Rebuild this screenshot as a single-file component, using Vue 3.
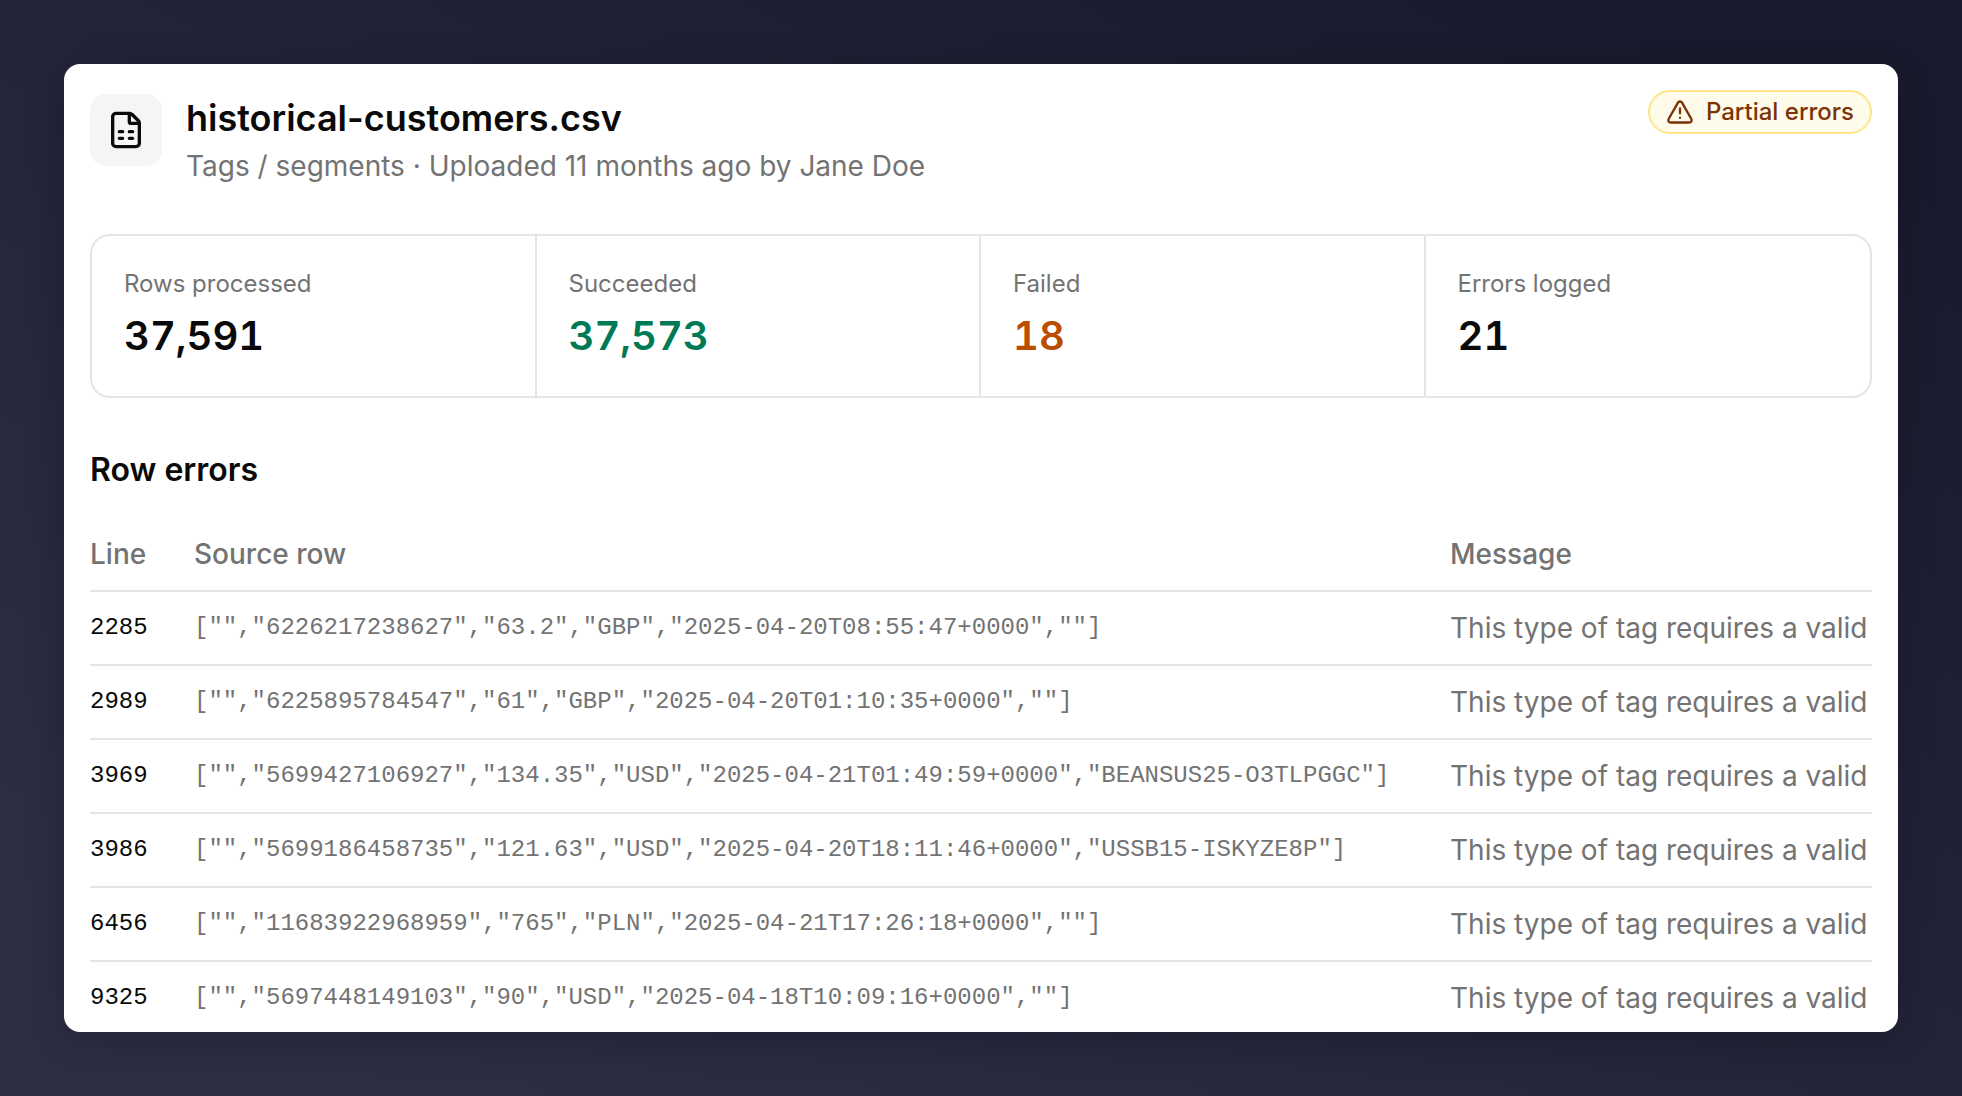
<script setup>
import { ref } from "vue";

const stats = ref([
  { label: "Rows processed", value: "37,591", tone: "" },
  { label: "Succeeded", value: "37,573", tone: "success" },
  { label: "Failed", value: "18", tone: "danger" },
  { label: "Errors logged", value: "21", tone: "" },
]);

const message = "This type of tag requires a valid";

const errors = ref([
  { line: 2285, source: '["","6226217238627","63.2","GBP","2025-04-20T08:55:47+0000",""]' },
  { line: 2989, source: '["","6225895784547","61","GBP","2025-04-20T01:10:35+0000",""]' },
  { line: 3969, source: '["","5699427106927","134.35","USD","2025-04-21T01:49:59+0000","BEANSUS25-O3TLPGGC"]' },
  { line: 3986, source: '["","5699186458735","121.63","USD","2025-04-20T18:11:46+0000","USSB15-ISKYZE8P"]' },
  { line: 6456, source: '["","11683922968959","765","PLN","2025-04-21T17:26:18+0000",""]' },
  { line: 9325, source: '["","5697448149103","90","USD","2025-04-18T10:09:16+0000",""]' },
]);
</script>

<template>
  <div class="page">
    <main class="card">
      <header class="header">
        <div class="file-icon">
          <svg viewBox="0 0 24 24" aria-hidden="true">
            <path
              d="M6 22a2 2 0 0 1-2-2V4a2 2 0 0 1 2-2h8a2.4 2.4 0 0 1 1.704.706l3.588 3.588A2.4 2.4 0 0 1 20 8v12a2 2 0 0 1-2 2z"
            />
            <path d="M14 2v5a1 1 0 0 0 1 1h5" />
            <path d="M8 13h2M14 13h2M8 17h2M14 17h2" />
          </svg>
        </div>
        <div class="heading">
          <h1>historical-customers.csv</h1>
          <p>Tags / segments · Uploaded 11 months ago by Jane Doe</p>
        </div>
        <span class="badge">
          <svg viewBox="0 0 24 24" aria-hidden="true">
            <path
              d="m21.73 18-8-14a2 2 0 0 0-3.48 0l-8 14A2 2 0 0 0 4 21h16a2 2 0 0 0 1.73-3"
            />
            <path d="M12 9v4M12 17h.01" />
          </svg>
          Partial errors
        </span>
      </header>

      <dl class="stats">
        <div v-for="stat in stats" :key="stat.label" class="stat">
          <dt>{{ stat.label }}</dt>
          <dd :class="stat.tone">{{ stat.value }}</dd>
        </div>
      </dl>

      <h2 id="row-errors">Row errors</h2>
      <table aria-labelledby="row-errors">
        <thead>
          <tr>
            <th class="col-line" scope="col">Line</th>
            <th scope="col">Source row</th>
            <th class="col-message" scope="col">Message</th>
          </tr>
        </thead>
        <tbody>
          <tr v-for="error in errors" :key="error.line">
            <td class="line">{{ error.line }}</td>
            <td class="source">{{ error.source }}</td>
            <td>{{ message }}</td>
          </tr>
        </tbody>
      </table>
    </main>
  </div>
</template>

<style>
body {
  margin: 0;
}
</style>

<style scoped>
.page {
  box-sizing: border-box;
  display: flex;
  height: 100vh;
  padding: 64px;
  background: linear-gradient(to bottom left, #1a1a2e 10%, #2d2d44 90%);
  font-family: Inter, sans-serif;
  color: #0a0a0a;
}

.card {
  box-sizing: border-box;
  flex: 1;
  min-width: 0;
  padding: 26px;
  border-radius: 16px;
  background: #fff;
  box-shadow: 0 8px 40px rgba(0, 0, 0, 0.2);
  overflow: hidden;
}

.header {
  display: flex;
  align-items: flex-start;
}

.file-icon {
  display: flex;
  align-items: center;
  justify-content: center;
  width: 72px;
  height: 72px;
  margin-top: 4px;
  margin-right: 24px;
  border-radius: 16px;
  background: #f5f5f5;
}

svg {
  fill: none;
  stroke: currentColor;
  stroke-width: 2;
  stroke-linecap: round;
  stroke-linejoin: round;
}

.file-icon svg {
  width: 40px;
  height: 40px;
}

.heading {
  flex: 1;
}

h1,
h2,
p,
dl,
dd {
  margin: 0;
}

h1 {
  font-size: 36px;
  font-weight: 600;
  line-height: 56px;
}

.heading p {
  color: #737373;
  font-size: 28px;
  line-height: 40px;
}

.badge {
  display: flex;
  align-items: center;
  gap: 12px;
  padding: 0 16px;
  border: 2px solid #fee685;
  border-radius: 24px;
  background: #fffbeb;
  color: #7b3306;
  font-size: 24px;
  font-weight: 500;
  line-height: 40px;
}

.badge svg {
  width: 28px;
  height: 28px;
}

.stats {
  display: grid;
  grid-template-columns: repeat(4, 1fr);
  margin-top: 48px;
  border: 2px solid #e5e5e5;
  border-radius: 20px;
}

.stat {
  padding: 32px;
  border-right: 2px solid #e5e5e5;
}

.stat:last-child {
  border-right: none;
}

.stat dt {
  color: #737373;
  font-size: 24px;
  line-height: 32px;
}

.stat dd {
  margin-top: 8px;
  font-size: 40px;
  font-weight: 600;
  font-variant-numeric: tabular-nums;
  line-height: 56px;
}

.stat .success {
  color: #007a55;
}

.stat .danger {
  color: #bb4d00;
}

h2 {
  margin-top: 48px;
  font-size: 32px;
  font-weight: 600;
  line-height: 48px;
}

table {
  width: 100%;
  margin-top: 24px;
  border-collapse: separate;
  border-spacing: 0;
  table-layout: fixed;
  color: #737373;
  font-size: 28px;
  line-height: 40px;
}

th,
td {
  padding: 16px 0;
  border-bottom: 2px solid #e5e5e5;
  text-align: left;
  white-space: nowrap;
}

th {
  font-weight: 500;
}

.col-line {
  width: 104px;
}

.col-message {
  width: 422px;
}

.line,
.source {
  font-family: "Liberation Mono", monospace;
  font-size: 24px;
}

.line {
  color: #0a0a0a;
}
</style>
